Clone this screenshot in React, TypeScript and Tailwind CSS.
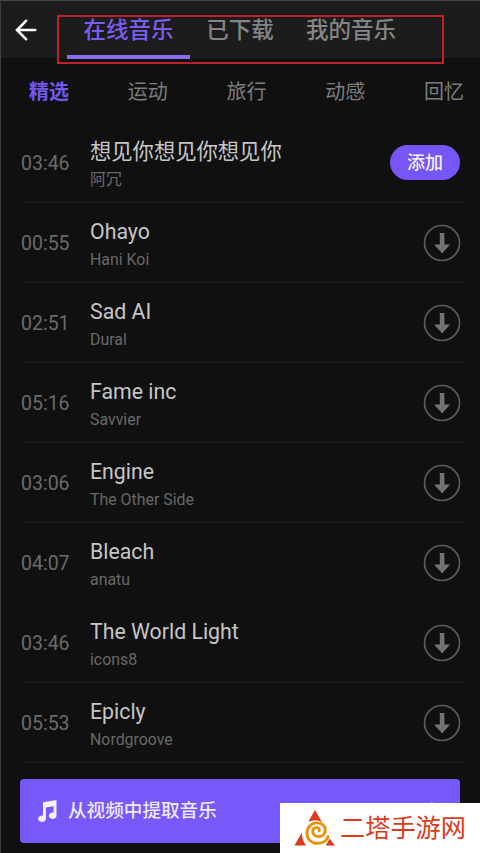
import React from 'react'
import clsx from 'clsx'

const tabs = ['在线音乐', '已下载', '我的音乐']
const categories = ['精选', '运动', '旅行', '动感', '回忆']

type Song = {
  time: string
  title: string
  artist: string
  added?: boolean
}

const songs: Song[] = [
  { time: '03:46', title: '想见你想见你想见你', artist: '阿冗', added: true },
  { time: '00:55', title: 'Ohayo', artist: 'Hani Koi' },
  { time: '02:51', title: 'Sad AI', artist: 'Dural' },
  { time: '05:16', title: 'Fame inc', artist: 'Savvier' },
  { time: '03:06', title: 'Engine', artist: 'The Other Side' },
  { time: '04:07', title: 'Bleach', artist: 'anatu' },
  { time: '03:46', title: 'The World Light', artist: 'icons8' },
  { time: '05:53', title: 'Epicly', artist: 'Nordgroove' },
]

const BackIcon = () => (
  <svg width="22" height="22" viewBox="0 0 22 22" fill="none" stroke="#fff" strokeWidth="2.6" strokeLinecap="round">
    <path d="M20.200 11H2.500M11 1.800 2 11l9 9.200" />
  </svg>
)

const DownloadIcon = () => (
  <svg width="38" height="38" viewBox="0 0 38 38">
    <circle cx="19" cy="19" r="17.500" fill="none" stroke="#5c5c5c" strokeWidth="1.700" />
    <path d="M16.800 9h4.600v11.500h5.800L19.100 29.200 11 20.500h5.800z" fill="#737373" />
  </svg>
)

const NoteIcon = () => (
  <svg width="20" height="22" viewBox="0 0 20 22" fill="#f5f2ff">
    <path d="M6 2.200 19.500 0v15.600a3.800 3.200 0 1 1-2.900-3V6.200L8.900 7.600v11a3.900 3.200 0 1 1-2.900-3z" />
  </svg>
)

const SpiralLogo = () => (
  <svg width="42" height="37" viewBox="0 0 42 37">
    <path d="M21 0l6.800 11.800Q21 8.500 14.300 11.800zM7.800 22.500Q8 31 12.300 35.600H.5zM35.500 28.500l5.500 7.100H31.500Q34.500 32 35.500 28.500z" fill="#dc3a1a" />
    <path
      d="M34.200 26.500C32.500 31 28.500 33.400 23.500 33.400 17.500 33.400 13 29 13 23.200 13 17 17.500 12.900 23 12.900 28 12.900 31.300 16 31.300 20 31.300 24 28.500 26.600 24.800 26.600 21.200 26.600 18.700 24.500 18.700 21.500 18.700 19 20.500 17.600 22.700 17.600 24.500 17.600 25.700 18.900 25.200 20.900"
      fill="none"
      stroke="#ea920f"
      strokeWidth="2.900"
      strokeLinecap="round"
    />
  </svg>
)

const Header = () => (
  <header className="flex h-[58px] border-t border-[#454545] bg-[#1c1c1c]">
    <div className="ml-[14px] mt-[18px] w-[42px] shrink-0">
      <BackIcon />
    </div>
    {/* Framed tab strip */}
    <nav className="mt-[14px] flex h-[49px] w-[387px] shrink-0 border-2 border-[#bf202b] pl-[8px]">
      {tabs.map((tab, i) => (
        <div
          key={tab}
          className={clsx(
            'flex h-[42px] justify-center text-[22.500px] leading-[26px] font-medium whitespace-nowrap',
            i === 0 && 'w-[123px] border-b-4 border-[#8d6cf3] text-[#7b5ef0]',
            i === 1 && 'ml-[15px] w-[70px] text-[#858585]',
            i === 2 && 'ml-[30px] w-[92px] text-[#858585]',
          )}
        >
          <span>{tab}</span>
        </div>
      ))}
    </nav>
  </header>
)

const SongRow = ({ song, divider }: { song: Song; divider: boolean }) => (
  <li className={clsx('mr-[13px] ml-[20px] flex h-[80px] border-b', divider ? 'border-[#1e1e1e]' : 'border-transparent')}>
    <span className="mt-[29px] w-[69px] shrink-0 text-[19.500px] leading-[24px] text-[#6a6a6a]">{song.time}</span>
    <div className="flex-1">
      <div className="mt-[15px] text-[21.300px] leading-[28px] text-[#c6c6c6]">{song.title}</div>
      <div className="mt-[4px] text-[15.900px] leading-[20px] text-[#686868]">{song.artist}</div>
    </div>
    {song.added ? (
      <button className="mt-[22px] mr-[7px] h-[35px] w-[70px] rounded-full bg-[#7656f6] text-[18px] leading-[36px] font-medium text-[#f3efff]">
        添加
      </button>
    ) : (
      <div className="mt-[21px] mr-[6px]">
        <DownloadIcon />
      </div>
    )}
  </li>
)

export default function App() {
  return (
    <div className="relative h-[853px] w-[480px] overflow-hidden border-l border-[#3c3c3c] bg-[#101010] font-[Roboto,'Noto_Sans_CJK_SC',sans-serif]">
      <Header />
      <div className="flex h-[65px] justify-between pt-[20px] pr-[16px] pl-[28px] text-[20px] leading-[28px] text-[#7d7d7d]">
        {categories.map((name, i) => (
          <span key={name} className={clsx(i === 0 && 'font-bold text-[#7458ee]')}>
            {name}
          </span>
        ))}
      </div>
      <ul>
        {songs.map((song, i) => (
          <SongRow key={i} song={song} divider={i !== 5} />
        ))}
      </ul>
      <div className="mt-[16px] ml-[19px] flex h-[64px] w-[440px] items-center rounded-[4px] bg-[#7759fa] pl-[17px] text-[18.600px] font-medium text-[#eee9ff]">
        <NoteIcon />
        <span className="mt-[2px] ml-[11px]">从视频中提取音乐</span>
        <svg className="mr-[20px] mb-[1px] ml-auto" width="12" height="20" viewBox="0 0 12 20" fill="none" stroke="#eee9ff" strokeWidth="2.500">
          <path d="M3 2l8 8-8 8" />
        </svg>
      </div>

      {/* Site badge over the bottom bar */}
      <div className="absolute right-0 bottom-0 flex h-[50px] w-[200px] bg-white">
        <div className="mt-[7px] ml-[14px]">
          <SpiralLogo />
        </div>
        <span className="mt-[8px] ml-[4px] text-[25.200px] leading-[36px] whitespace-nowrap text-[#dc3a1a]">二塔手游网</span>
      </div>
    </div>
  )
}
